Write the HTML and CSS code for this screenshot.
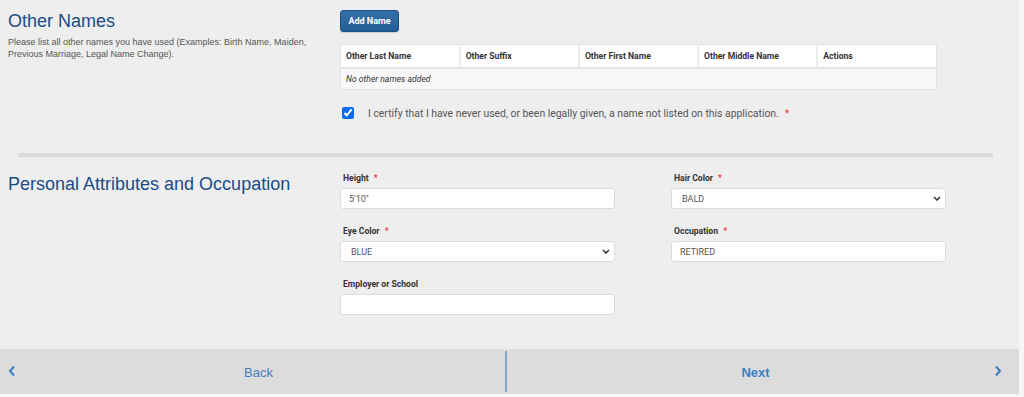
FILE: index.html
```html
<!DOCTYPE html>
<html lang="en">
<head>
<meta charset="utf-8">
<title>Other Names</title>
<link rel="stylesheet" href="styles.css">
</head>
<body>
<div class="page">
  <div class="main">
    <section class="section section-names">
      <div class="intro">
        <h2 class="title">Other Names</h2>
        <p class="desc">Please list all other names you have used (Examples: Birth Name, Maiden, Previous Marriage, Legal Name Change).</p>
      </div>
      <div class="content">
        <button class="btn-add" type="button">Add Name</button>
        <table class="names-table">
          <thead>
            <tr>
              <th>Other Last Name</th>
              <th>Other Suffix</th>
              <th>Other First Name</th>
              <th>Other Middle Name</th>
              <th>Actions</th>
            </tr>
          </thead>
          <tbody>
            <tr><td colspan="5" class="empty">No other names added</td></tr>
          </tbody>
        </table>
        <label class="certify">
          <input type="checkbox" checked>
          <span>I certify that I have never used, or been legally given, a name not listed on this application.</span>
          <span class="req">*</span>
        </label>
      </div>
    </section>

    <hr class="divider">

    <section class="section section-attrs">
      <div class="intro">
        <h2 class="title">Personal Attributes and Occupation</h2>
      </div>
      <div class="content form-grid">
        <div class="field">
          <label class="lbl">Height <span class="req">*</span></label>
          <input class="ctl" type="text" value="5'10&quot;">
        </div>
        <div class="field">
          <label class="lbl">Hair Color <span class="req">*</span></label>
          <div class="select-wrap">
            <select class="ctl sel"><option>BALD</option></select>
            <svg class="chev" width="8" height="5" viewBox="0 0 8 5"><polyline points="1,1 4,4 7,1" fill="none" stroke="#333" stroke-width="1.5"/></svg>
          </div>
        </div>
        <div class="field">
          <label class="lbl">Eye Color <span class="req">*</span></label>
          <div class="select-wrap">
            <select class="ctl sel"><option>BLUE</option></select>
            <svg class="chev" width="8" height="5" viewBox="0 0 8 5"><polyline points="1,1 4,4 7,1" fill="none" stroke="#333" stroke-width="1.5"/></svg>
          </div>
        </div>
        <div class="field">
          <label class="lbl">Occupation <span class="req">*</span></label>
          <input class="ctl" type="text" value="RETIRED">
        </div>
        <div class="field">
          <label class="lbl">Employer or School</label>
          <input class="ctl" type="text" value="">
        </div>
      </div>
    </section>
  </div>

  <nav class="pager">
    <a class="pager-btn back" href="#">
      <svg class="arrow" width="8" height="12" viewBox="0 0 8 12"><polyline points="6,1.5 2,6 6,10.5" fill="none" stroke="#3b7cc2" stroke-width="2"/></svg>
      <span>Back</span>
    </a>
    <span class="pager-sep"></span>
    <a class="pager-btn next" href="#">
      <span>Next</span>
      <svg class="arrow" width="8" height="12" viewBox="0 0 8 12"><polyline points="2,1.5 6,6 2,10.5" fill="none" stroke="#3b7cc2" stroke-width="2"/></svg>
    </a>
  </nav>
</div>
</body>
</html>
```

FILE: styles.css
```css
* { box-sizing: border-box; }

html, body {
  margin: 0;
  padding: 0;
  background: #f6f6f6;
}

.page {
  width: 1019px;
  background: #eeeeee;
  font-family: Roboto, "Liberation Sans", Arial, sans-serif;
}

.main {
  padding-top: 10px;
  height: 349px;
}

.section {
  display: grid;
  grid-template-columns: 340px 597px;
}

.intro {
  padding-left: 8px;
}

.title {
  margin: 1px 0 0;
  font-family: "Liberation Sans", Arial, sans-serif;
  font-weight: normal;
  font-size: 18px;
  line-height: 21px;
  color: #1b4c86;
}

.desc {
  margin: 4px 0 0;
  font-family: "Liberation Sans", Arial, sans-serif;
  font-size: 9px;
  line-height: 12px;
  color: #555;
  width: 322px;
}

.btn-add {
  display: block;
  height: 22px;
  width: 59px;
  padding: 0;
  border: 1px solid #1e4f80;
  border-radius: 3px;
  background: linear-gradient(#3470a8, #245d95);
  color: #fff;
  font-family: Roboto, sans-serif;
  font-weight: bold;
  font-size: 9px;
  box-shadow: 0 1px 1px rgba(0,0,0,0.15);
}

.names-table {
  margin-top: 12px;
  width: 597px;
  border-collapse: collapse;
  border: 1px solid #e2e2e2;
  table-layout: fixed;
  font-size: 8.6px;
  color: #333;
}

.names-table th {
  height: 23px;
  background: #fff;
  text-align: left;
  font-weight: bold;
  padding: 0 5px;
  border-left: 2px solid #ececec;
  border-bottom: 2px solid #e4e4e4;
}

.names-table th:first-child { border-left: none; }

.names-table td.empty {
  height: 22px;
  background: #f8f8f8;
  font-style: italic;
  padding: 0 5px;
}

.certify {
  display: flex;
  align-items: center;
  margin-top: 16px;
  height: 14px;
  font-size: 10.4px;
  color: #555;
}

.certify input {
  margin: 0 14px 0 2px;
  width: 12px;
  height: 12px;
  accent-color: #0a6cf0;
}

.req {
  color: #e0404a;
  margin-left: 6px;
}

.divider {
  margin: 33px 26px 0 18px;
  height: 4px;
  border: none;
  background: #dcdcdc;
}

.section-attrs {
  margin-top: 16px;
}

.section-attrs .title {
  margin-top: 1px;
}

.form-grid {
  display: grid;
  grid-template-columns: 275px 275px;
  column-gap: 56px;
  row-gap: 17px;
  align-content: start;
}

.field {
  display: flex;
  flex-direction: column;
}

.lbl {
  font-size: 8.6px;
  font-weight: bold;
  color: #333;
  line-height: 11px;
  height: 11px;
  margin-bottom: 4px;
  padding-left: 3px;
}

.lbl .req {
  margin-left: 3px;
}

.ctl {
  display: block;
  width: 275px;
  height: 21px;
  margin: 0;
  border: 1px solid #dcdcdc;
  border-radius: 3px;
  background: #fff;
  padding: 0 8px;
  font-family: Roboto, sans-serif;
  font-size: 9px;
  color: #555;
  appearance: none;
  -webkit-appearance: none;
  outline: none;
}

.ctl.sel {
  padding-left: 10px;
}

.select-wrap {
  position: relative;
  width: 275px;
  height: 21px;
}

.chev {
  position: absolute;
  right: 5px;
  top: 8px;
}

.pager {
  display: flex;
  align-items: center;
  height: 45px;
  background: #dcdcdc;
}

.pager-btn {
  flex: 1;
  display: flex;
  align-items: center;
  justify-content: center;
  position: relative;
  height: 100%;
  text-decoration: none;
  font-family: "Liberation Sans", Arial, sans-serif;
  font-size: 13px;
  color: #3d7fc2;
}

.pager-btn.back { width: 505px; flex: none; padding-left: 12px; }
.pager-btn.next { font-weight: bold; padding-right: 15px; }

.pager-btn span { padding-top: 2px; }

.back .arrow {
  position: absolute;
  left: 8px;
  top: 16px;
}

.next .arrow {
  position: absolute;
  right: 17px;
  top: 16px;
}

.pager-sep {
  width: 2px;
  height: 41px;
  background: #7ba5d0;
}
```
